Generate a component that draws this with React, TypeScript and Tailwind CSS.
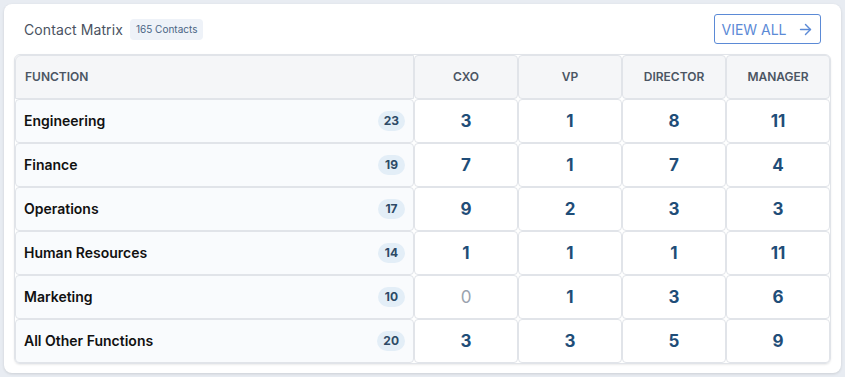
import { ArrowRight } from "lucide-react";

type Row = { name: string; total: number; counts: number[] };

const rows: Row[] = [
  { name: "Engineering", total: 23, counts: [3, 1, 8, 11] },
  { name: "Finance", total: 19, counts: [7, 1, 7, 4] },
  { name: "Operations", total: 17, counts: [9, 2, 3, 3] },
  { name: "Human Resources", total: 14, counts: [1, 1, 1, 11] },
  { name: "Marketing", total: 10, counts: [0, 1, 3, 6] },
  { name: "All Other Functions", total: 20, counts: [3, 3, 5, 9] },
];

const levels = ["CXO", "VP", "DIRECTOR", "MANAGER"];

export default function App() {
  return (
    <div className="min-h-[377px] bg-[#e8ecf2] p-1 font-['Inter',sans-serif]">
      <div className="rounded-lg bg-white px-[10px] pb-[9px] pt-[10px] shadow-[0_1px_3px_rgba(0,0,0,0.12)]">
        <div className="flex items-center justify-between pb-[10px]">
          <div className="flex items-center gap-[7px] pl-[10px] pt-[1px]">
            <h1 className="text-[14px] tracking-[0.1px] text-[#4a5261]">Contact Matrix</h1>
            <span className="rounded bg-[#eef2f8] px-[6px] py-[3px] text-[10px] text-[#4a6584]">165 Contacts</span>
          </div>
          <button
            type="button"
            className="mr-[10px] flex h-[30px] w-[107px] items-center justify-center gap-[10px] rounded-[3px] border border-[#5b8ad6] text-[14px] text-[#5b8ad6]"
          >
            VIEW ALL
            <ArrowRight size={17} strokeWidth={2} />
          </button>
        </div>

        <div className="grid grid-cols-[399px_104px_104px_104px_104px] rounded-md border border-[#e1e4e9] shadow-[0_1px_2px_rgba(0,0,0,0.08)]">
          <div className="flex h-[44px] items-center rounded-tl-md border border-[#e1e4e9] bg-[#f5f6f8] px-[9px] text-[12px] font-semibold text-[#4b5563]">
            FUNCTION
          </div>
          {levels.map((level) => (
            <div
              key={level}
              className="flex h-[44px] items-center justify-center rounded border border-[#e1e4e9] bg-[#f5f6f8] text-[12px] font-semibold text-[#4b5563]"
            >
              {level}
            </div>
          ))}

          {rows.map((row) => (
            <div key={row.name} className="contents">
              <div className="flex h-[44px] items-center justify-between rounded border border-[#e1e4e9] bg-[#f9fbfd] pl-[8px] pr-[8px]">
                <span className="text-[14px] leading-none font-semibold text-[#111]">{row.name}</span>
                <span className="flex h-[20px] min-w-[27px] items-center justify-center rounded-full bg-[#e3eef7] px-[6px] text-[12px] leading-none font-bold text-[#2d4a66]">
                  {row.total}
                </span>
              </div>
              {row.counts.map((count, i) => (
                <div
                  key={i}
                  className="flex h-[44px] items-center justify-center rounded border border-[#e1e4e9] bg-white"
                >
                  {count === 0 ? (
                    <span className="text-[17px] leading-none text-[#9aa3ae]">0</span>
                  ) : (
                    <span className="text-[17px] leading-none font-bold text-[#1f4d78]">{count}</span>
                  )}
                </div>
              ))}
            </div>
          ))}
        </div>
      </div>
    </div>
  );
}
